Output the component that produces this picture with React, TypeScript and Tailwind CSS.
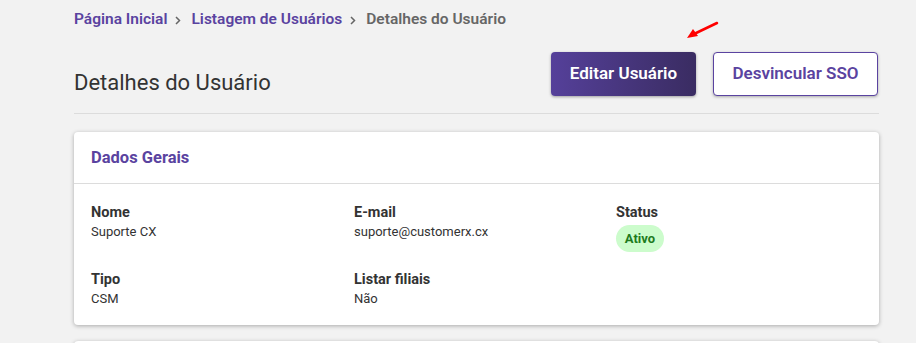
import React from "react";

const Field = ({ label, children }: { label: string; children: React.ReactNode }) => (
  <div className="flex flex-col">
    <span className="text-[14.5px] font-bold leading-[18px] text-[#333]">{label}</span>
    <div className="text-[13px] leading-[18px] text-[#333] mt-[1px]">{children}</div>
  </div>
);

const Chevron = () => (
  <svg className="ml-[8px] mr-[10px]" width="6" height="9" viewBox="0 0 6 9">
    <path d="M1 1 L4.5 4.5 L1 8" fill="none" stroke="#666" strokeWidth="1.5" />
  </svg>
);

export default function App() {
  return (
    <div className="h-[343px] w-[916px] bg-[#f2f2f2] overflow-hidden relative" style={{ fontFamily: "Roboto, 'Noto Sans', sans-serif" }}>
      <div className="ml-[74px] w-[805px]">
        <nav className="flex items-center h-[20px] mt-[10px] text-[15.5px] font-semibold">
          <span className="text-[#5a43a0]">Página Inicial</span>
          <Chevron />
          <span className="text-[#5a43a0]">Listagem de Usuários</span>
          <Chevron />
          <span className="text-[#666]">Detalhes do Usuário</span>
        </nav>
        <div className="flex items-center justify-between mt-[22px] h-[44px]">
          <h1 className="text-[22px] font-normal text-[#333] mt-[16px]">Detalhes do Usuário</h1>
          <div className="flex gap-[17px] mr-[1px]">
            <button className="h-[44px] w-[145px] rounded-[4px] bg-gradient-to-r from-[#55409a] to-[#3a2c62] text-white text-[17px] font-semibold shadow-[0_1px_3px_rgba(0,0,0,0.35)]">
              Editar Usuário
            </button>
            <button className="h-[44px] w-[165px] rounded-[4px] bg-white border border-[#5a43a0] text-[#5a43a0] text-[17px] font-semibold shadow-[0_1px_3px_rgba(0,0,0,0.3)]">
              Desvincular SSO
            </button>
          </div>
        </div>
        <div className="mt-[17px] border-t border-[#dcdcdc]" />
        <div className="mt-[18px] bg-white rounded-[4px] shadow-[0_1px_4px_rgba(0,0,0,0.3)]">
          <div className="h-[52px] flex items-center px-[17px] border-b border-[#dcdcdc]">
            <h2 className="text-[16.5px] font-bold text-[#5a43a0] mt-[1px]">Dados Gerais</h2>
          </div>
          <div className="pl-[17px] pt-[20px] pb-[17px] grid grid-cols-[263px_262px_1fr] gap-y-[19px]">
            <Field label="Nome">Suporte CX</Field>
            <Field label="E-mail">suporte@customerx.cx</Field>
            <div className="flex flex-col">
              <span className="text-[14.5px] font-bold leading-[18px] text-[#333]">Status</span>
              <span className="mt-[3px] w-[48px] h-[27px] rounded-full bg-[#ccfccc] text-[#1e7b1e] text-[13px] font-bold flex items-center justify-center">
                Ativo
              </span>
            </div>
            <Field label="Tipo">CSM</Field>
            <Field label="Listar filiais">Não</Field>
          </div>
        </div>
        <div className="mt-[16px] h-[20px] bg-white rounded-[4px] shadow-[0_1px_4px_rgba(0,0,0,0.3)]" />
      </div>
      <svg className="absolute left-[684px] top-[20px]" width="36" height="20" viewBox="0 0 36 20">
        <line x1="33" y1="3" x2="10" y2="14" stroke="#ff0000" strokeWidth="2.5" strokeLinecap="round" />
        <polygon points="3,18 9,9 14,16" fill="#ff0000" />
      </svg>
    </div>
  );
}
